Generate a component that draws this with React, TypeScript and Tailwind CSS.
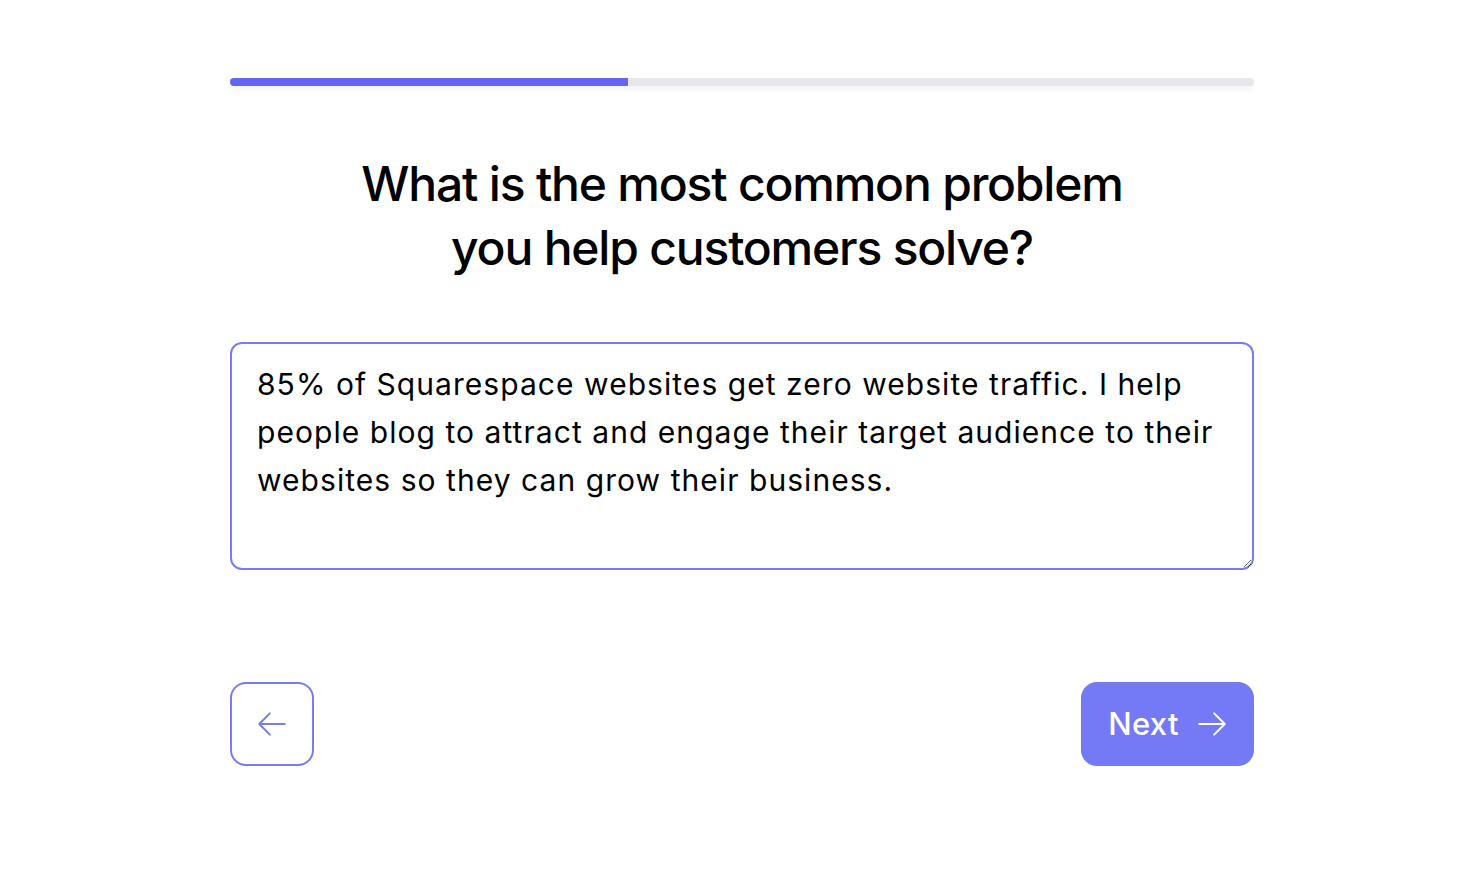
const answer =
  '85% of Squarespace websites get zero website traffic. I help people blog to attract and engage their target audience to their websites so they can grow their business.'

function Arrow({ dir }: { dir: 'left' | 'right' }) {
  const d = dir === 'left' ? 'M10.5 19.5 3 12m0 0 7.5-7.5M3 12h18' : 'M13.5 4.5 21 12m0 0-7.5 7.5M21 12H3'
  return (
    <svg viewBox="0 0 24 24" fill="none" stroke="currentColor" strokeWidth={1.4} strokeLinecap="round" strokeLinejoin="round" className="h-[34px] w-[34px]">
      <path d={d} />
    </svg>
  )
}

export default function App() {
  const progress = 38.9

  return (
    <div className="min-h-screen bg-white font-['Inter',sans-serif] text-black">
      <div className="ml-[230px] w-[1024px] pt-[78px]">
        <div className="h-2 w-full overflow-hidden rounded-full bg-[#e5e7eb] shadow-[0_4px_6px_rgba(0,0,0,0.05)]">
          <div className="h-full bg-[#6366f1]" style={{ width: `${progress}%` }} />
        </div>

        <h1 className="mt-[66px] text-center text-[48px] font-medium leading-[64px] tracking-[-0.025em]">
          What is the most common problem
          <br />
          you help customers solve?
        </h1>

        <textarea
          defaultValue={answer}
          className="mt-[62px] block h-[228px] w-full resize-y rounded-xl border-2 border-[#777cf3] px-[25px] pt-[16px] pb-[14px] text-[30px] leading-[48px] tracking-[0.035em] outline-none"
        />

        <div className="mt-[112px] flex items-center justify-between">
          <button className="flex h-[84px] w-[84px] items-center justify-center rounded-2xl border-2 border-[#777cf3] text-[#777cf3]">
            <Arrow dir="left" />
          </button>
          <button className="flex h-[84px] w-[173px] items-center justify-center gap-[16px] rounded-2xl bg-[#7479f5] pl-[2px] text-[31px] font-medium tracking-[0.01em] text-white">
            Next
            <Arrow dir="right" />
          </button>
        </div>
      </div>
    </div>
  )
}
